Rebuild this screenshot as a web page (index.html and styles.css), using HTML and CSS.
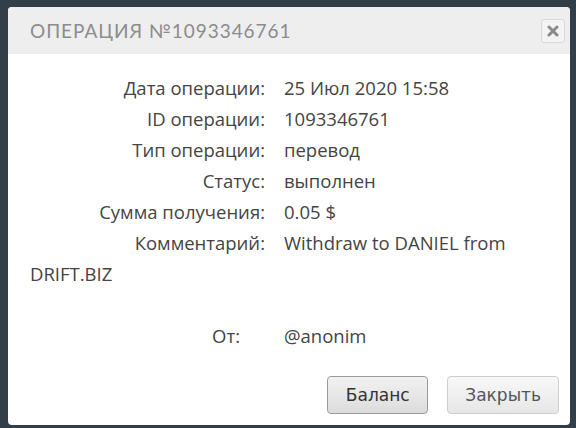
FILE: index.html
```html
<!DOCTYPE html>
<html>
<head>
<meta charset="utf-8">
<link rel="stylesheet" href="styles.css">
</head>
<body>
<div class="modal">
  <div class="modal-header">
    <h3 class="title">Операция №1093346761</h3>
    <button class="close" aria-label="close">
      <svg width="12" height="12" viewBox="0 0 12 12"><path d="M2 2 L10 10 M10 2 L2 10" stroke="#8a8a8a" stroke-width="3" stroke-linecap="round"/></svg>
    </button>
  </div>
  <div class="modal-body">
    <div class="row"><span class="label">Дата операции:</span>25 Июл 2020 15:58</div>
    <div class="row"><span class="label">ID операции:</span>1093346761</div>
    <div class="row"><span class="label">Тип операции:</span>перевод</div>
    <div class="row"><span class="label">Статус:</span>выполнен</div>
    <div class="row"><span class="label">Сумма получения:</span>0.05 $</div>
    <div class="row"><span class="label">Комментарий:</span>Withdraw to DANIEL from DRIFT.BIZ</div>
    <div class="row empty"></div>
    <div class="row"><span class="label label-short">От:</span>@anonim</div>
  </div>
  <div class="modal-footer">
    <button class="btn btn-primary">Баланс</button>
    <button class="btn">Закрыть</button>
  </div>
</div>
</body>
</html>
```
FILE: styles.css
```css
html, body {
  margin: 0;
  padding: 0;
  height: 100%;
  background: #333f48;
  overflow: hidden;
}
body {
  padding: 7px 6px 0 8px;
  box-sizing: border-box;
}
.modal {
  background: #fff;
  border-radius: 4px;
  height: 418px;
  display: flex;
  flex-direction: column;
  overflow: hidden;
}
.modal-header {
  background: #eeeeee;
  height: 47px;
  display: flex;
  align-items: center;
  justify-content: space-between;
  padding: 0 5px 0 22px;
  flex: none;
}
.title {
  margin: 0;
  font-family: "Lato", "DejaVu Sans", sans-serif;
  font-weight: 400;
  font-size: 19px;
  letter-spacing: 0.95px;
  color: #8c8c8c;
  text-transform: uppercase;
}
.close {
  width: 24px;
  height: 24px;
  border: 1px solid #d8d8d8;
  border-radius: 3px;
  background: #f3f3f3;
  padding: 0;
  display: flex;
  align-items: center;
  justify-content: center;
}
.modal-body {
  padding: 18px 22px 0 22px;
  font-family: "Open Sans", "DejaVu Sans", sans-serif;
  font-size: 18.5px;
  line-height: 31px;
  color: #444;
  flex: 1;
}
.row {
  min-height: 31px;
}
.label {
  display: inline-block;
  width: 235px;
  text-align: right;
  margin-right: 19px;
}
.label-short {
  width: 210px;
  margin-right: 44px;
}
.modal-footer {
  display: flex;
  justify-content: flex-end;
  gap: 19px;
  padding: 0 11px 11px 0;
}
.btn {
  font-family: "DejaVu Sans", Verdana, sans-serif;
  font-size: 17px;
  color: #555;
  height: 38px;
  padding: 0 17px;
  border: 1px solid #cdcdcd;
  border-radius: 4px;
  background: linear-gradient(#f8f8f8, #e6e6e6);
}
.btn-primary {
  border-color: #9a9a9a;
  color: #333;
  min-width: 101px;
  padding: 0 10px;
  background: linear-gradient(#f2f2f2, #dcdcdc);
}
```
